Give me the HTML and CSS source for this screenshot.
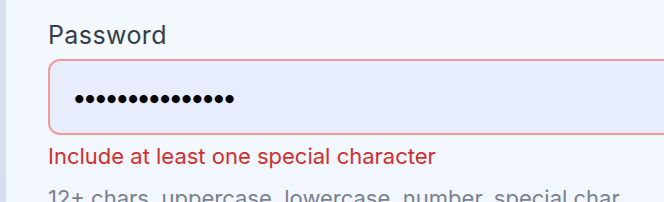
FILE: index.html
```html
<!DOCTYPE html>
<html lang="en">
<head>
    <meta charset="UTF-8">
    <meta name="viewport" content="width=device-width, initial-scale=1.0">
    <title>Password</title>
    <link rel="stylesheet" href="styles.css">
</head>
<body>

    <div class="card">
        <div class="field">
            <label class="field-label" for="password">Password</label>
            <input class="field-input invalid" id="password" type="password" value="abcdefghijklmno">
            <p class="field-error">Include at least one special character</p>
            <p class="field-hint">12+ chars, uppercase, lowercase, number, special char</p>
        </div>
    </div>

</body>
</html>
```

FILE: styles.css
```css
body {
    margin: 0;
    font-family: Inter, "Noto Sans", sans-serif;
    background: #f3f7fe;
    overflow: hidden;
}

.card {
    height: 202px;
    border-left: 6px solid #d9dfee;
    padding-left: 42px;
    background: linear-gradient(#f4f8ff, #f2f6fe);
}

.field {
    width: 760px;
    padding-top: 17px;
}

.field-label {
    display: block;
    font-size: 25px;
    line-height: 36px;
    letter-spacing: 0.4px;
    color: #363c4a;
    font-weight: 400;
}

.field-input {
    display: block;
    box-sizing: border-box;
    width: 100%;
    height: 76px;
    margin-top: 6px;
    padding: 0 22px;
    border: 2px solid #ccd4e6;
    border-radius: 12px;
    background: #e7edfc;
    font-family: Inter, sans-serif;
    font-size: 26px;
    letter-spacing: -3.9px;
    color: #000;
    outline: none;
}

.field-input.invalid {
    border-color: #f09a9a;
}

.field-error {
    margin: 6px 0 0;
    font-size: 22px;
    line-height: 30px;
    color: #d22f2f;
}

.field-hint {
    margin: 12px 0 0;
    font-size: 22px;
    line-height: 30px;
    color: #7a8090;
    white-space: nowrap;
}
```
